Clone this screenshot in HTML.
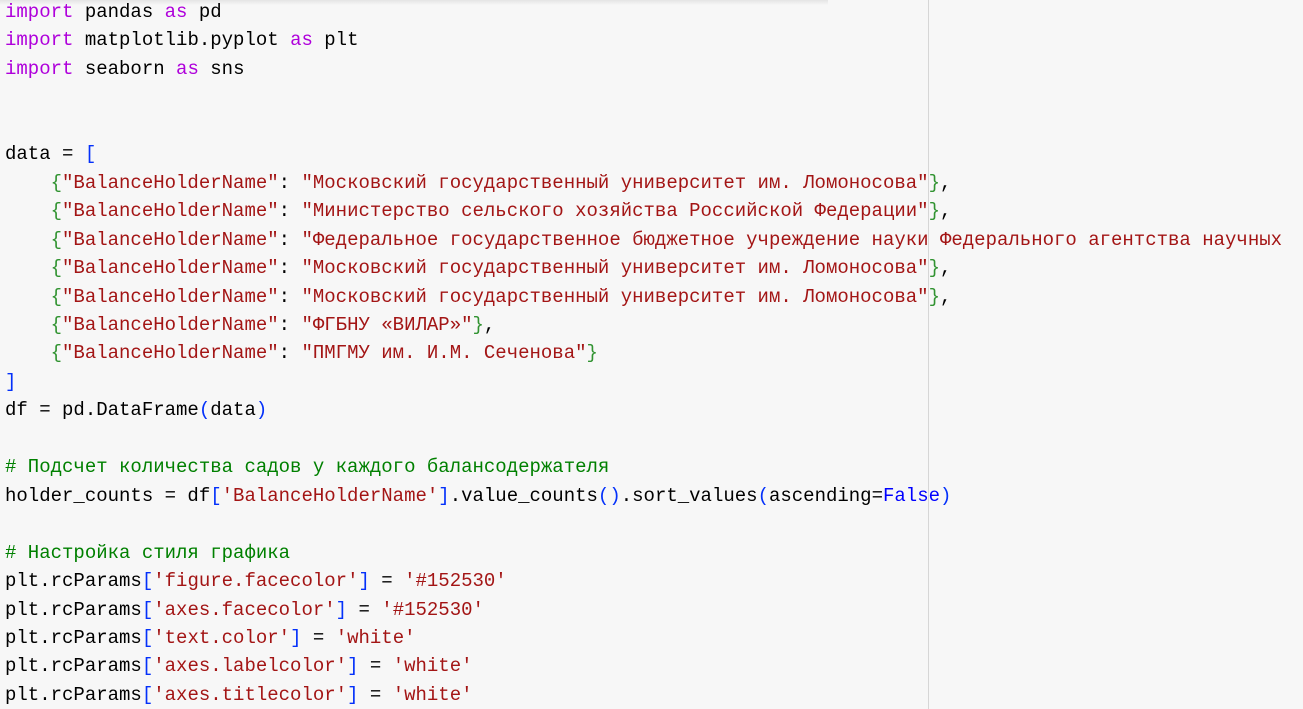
<!DOCTYPE html>
<html><head><meta charset="utf-8"><style>
html,body{margin:0;padding:0;width:1303px;height:709px;overflow:hidden;background:#f7f7f7;}
.top{position:absolute;left:0;top:0;width:828px;height:5px;background:linear-gradient(#e4e4e4,#f7f7f7);}
.vl{position:absolute;left:928px;top:0;width:1px;height:709px;background:#d6d6d6;}
pre{position:absolute;left:5px;top:-2px;margin:0;font-family:"Liberation Mono","DejaVu Sans Mono",monospace;font-size:19px;line-height:28.45px;color:#000;white-space:pre;}
.k{color:#af00db}.s{color:#a31515}.c{color:#008000}.b{color:#0431fa}.g{color:#319331}.f{color:#0000ff}
</style></head><body>
<div class="top"></div><div class="vl"></div>
<pre><span class="k">import</span> pandas <span class="k">as</span> pd
<span class="k">import</span> matplotlib.pyplot <span class="k">as</span> plt
<span class="k">import</span> seaborn <span class="k">as</span> sns


data = <span class="b">[</span>
    <span class="g">{</span><span class="s">"BalanceHolderName"</span>: <span class="s">"Московский государственный университет им. Ломоносова"</span><span class="g">}</span>,
    <span class="g">{</span><span class="s">"BalanceHolderName"</span>: <span class="s">"Министерство сельского хозяйства Российской Федерации"</span><span class="g">}</span>,
    <span class="g">{</span><span class="s">"BalanceHolderName"</span>: <span class="s">"Федеральное государственное бюджетное учреждение науки Федерального агентства научных</span>
    <span class="g">{</span><span class="s">"BalanceHolderName"</span>: <span class="s">"Московский государственный университет им. Ломоносова"</span><span class="g">}</span>,
    <span class="g">{</span><span class="s">"BalanceHolderName"</span>: <span class="s">"Московский государственный университет им. Ломоносова"</span><span class="g">}</span>,
    <span class="g">{</span><span class="s">"BalanceHolderName"</span>: <span class="s">"ФГБНУ «ВИЛАР»"</span><span class="g">}</span>,
    <span class="g">{</span><span class="s">"BalanceHolderName"</span>: <span class="s">"ПМГМУ им. И.М. Сеченова"</span><span class="g">}</span>
<span class="b">]</span>
df = pd.DataFrame<span class="b">(</span>data<span class="b">)</span>

<span class="c"># Подсчет количества садов у каждого балансодержателя</span>
holder_counts = df<span class="b">[</span><span class="s">'BalanceHolderName'</span><span class="b">]</span>.value_counts<span class="b">()</span>.sort_values<span class="b">(</span>ascending=<span class="f">False</span><span class="b">)</span>

<span class="c"># Настройка стиля графика</span>
plt.rcParams<span class="b">[</span><span class="s">'figure.facecolor'</span><span class="b">]</span> = <span class="s">'#152530'</span>
plt.rcParams<span class="b">[</span><span class="s">'axes.facecolor'</span><span class="b">]</span> = <span class="s">'#152530'</span>
plt.rcParams<span class="b">[</span><span class="s">'text.color'</span><span class="b">]</span> = <span class="s">'white'</span>
plt.rcParams<span class="b">[</span><span class="s">'axes.labelcolor'</span><span class="b">]</span> = <span class="s">'white'</span>
plt.rcParams<span class="b">[</span><span class="s">'axes.titlecolor'</span><span class="b">]</span> = <span class="s">'white'</span>
</pre>
</body></html>
